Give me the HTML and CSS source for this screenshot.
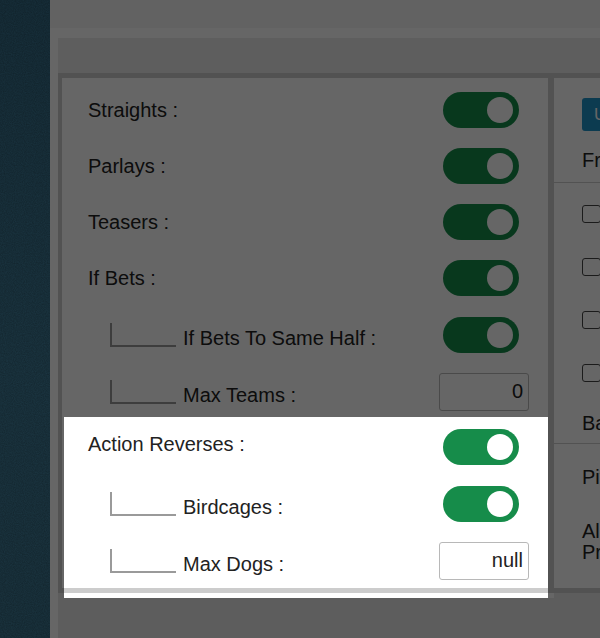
FILE: index.html
```html
<!DOCTYPE html>
<html lang="en">
<head>
    <meta charset="UTF-8">
    <meta name="viewport" content="width=device-width, initial-scale=1.0">
    <title>Wager Settings</title>
    <link rel="stylesheet" href="styles.css">
</head>
<body>
    <div class="sidebar">
        <svg class="grain" width="50" height="638">
            <filter id="noise">
                <feTurbulence type="fractalNoise" baseFrequency="0.9" numOctaves="2" seed="3"/>
                <feColorMatrix type="matrix" values="0 0 0 0 0  0 0 0 0 0  0 0 0 0 0  0 0 0 0.3 0"/>
            </filter>
            <rect width="50" height="638" filter="url(#noise)"/>
        </svg>
    </div>
    <div class="main">
        <div class="topbar"></div>
        <div class="content">
            <div class="subbar"></div>
            <div class="panels">
                <div class="panel panel-left">
                    <div class="row">
                        <span class="label">Straights :</span>
                        <div class="control"><span class="toggle"></span></div>
                    </div>
                    <div class="row">
                        <span class="label">Parlays :</span>
                        <div class="control"><span class="toggle"></span></div>
                    </div>
                    <div class="row">
                        <span class="label">Teasers :</span>
                        <div class="control"><span class="toggle"></span></div>
                    </div>
                    <div class="row">
                        <span class="label">If Bets :</span>
                        <div class="control"><span class="toggle"></span></div>
                    </div>
                    <div class="row sub">
                        <span class="branch"></span>
                        <span class="label">If Bets To Same Half :</span>
                        <div class="control"><span class="toggle"></span></div>
                    </div>
                    <div class="row sub">
                        <span class="branch"></span>
                        <span class="label">Max Teams :</span>
                        <div class="control"><input class="field" type="text" value="0"></div>
                    </div>
                    <div class="group">
                        <div class="row main-row">
                            <span class="label">Action Reverses :</span>
                            <div class="control"><span class="toggle"></span></div>
                        </div>
                        <div class="row sub">
                            <span class="branch"></span>
                            <span class="label">Birdcages :</span>
                            <div class="control"><span class="toggle"></span></div>
                        </div>
                        <div class="row sub">
                            <span class="branch"></span>
                            <span class="label">Max Dogs :</span>
                            <div class="control"><input class="field" type="text" value="null"></div>
                        </div>
                    </div>
                </div>
                <div class="panel panel-right">
                    <div class="rp-head">
                        <button class="btn-blue">Update</button>
                        <div class="rp-title">From</div>
                    </div>
                    <div class="rp-list">
                        <div class="rp-check"><span class="box"></span>Soccer</div>
                        <div class="rp-check"><span class="box"></span>Hockey</div>
                        <div class="rp-check"><span class="box"></span>Tennis</div>
                        <div class="rp-check"><span class="box"></span>Golf</div>
                    </div>
                    <div class="rp-item ba">Base Limit</div>
                    <div class="rp-item pi">Pitchers</div>
                    <div class="rp-item al">Allow<br>Props</div>
                </div>
            </div>
            <div class="under"></div>
        </div>
    </div>

    <div class="highlight"></div>
</body>
</html>
```

FILE: styles.css
```css
* {
    box-sizing: border-box;
}
body {
    margin: 0;
    height: 100vh;
    display: flex;
    overflow: hidden;
    font-family: "Liberation Sans", Arial, sans-serif;
    font-size: 20px;
    color: #222;
    background: #fff;
}
.sidebar {
    width: 50px;
    flex-shrink: 0;
    background: linear-gradient(#3b7896, #4689a8 60%, #4383a0);
    overflow: hidden;
}
.grain {
    display: block;
}
.main {
    flex: 1;
    display: flex;
    flex-direction: column;
    background: #fff;
    min-width: 0;
}
.topbar {
    height: 33px;
    background: #f6f6f6;
    border-bottom: 5px solid #fff;
}
.content {
    flex: 1;
    margin: 5px 0 0 8px;
    background: #e8e8e8;
    overflow: hidden;
}
.subbar {
    height: 35px;
    background: #ebebeb;
}
.panels {
    display: flex;
    height: 520px;
}
.under {
    width: 490px;
    height: 5px;
    margin-left: 6px;
    background: #fff;
}
.panel {
    background: #fff;
    border: 5px solid #ccc;
    flex-shrink: 0;
}
.panel-left {
    width: 495px;
    border-left-width: 4px;
    padding: 4px 19px 0 26px;
}
.row {
    display: flex;
    align-items: center;
    height: 56px;
}
.row.sub {
    height: 57px;
}
.group {
    margin-top: -2px;
}
.group .row {
    height: 57px;
}
.label {
    flex: 1;
    white-space: nowrap;
}
.sub .label {
    padding-top: 8px;
}
.main-row .label {
    padding-bottom: 4px;
}
.branch {
    width: 66px;
    height: 24px;
    margin-left: 22px;
    margin-right: 7px;
    border-left: 2px solid #9a9a9a;
    border-bottom: 2px solid #9a9a9a;
}
.control {
    width: 90px;
    display: flex;
    justify-content: flex-end;
}
.toggle {
    position: relative;
    width: 76px;
    height: 36px;
    margin-right: 10px;
    border-radius: 18px;
    background: #168c4a;
}
.toggle::after {
    content: "";
    position: absolute;
    top: 5px;
    right: 6px;
    width: 26px;
    height: 26px;
    border-radius: 50%;
    background: #fff;
}
.field {
    width: 90px;
    height: 38px;
    border: 1px solid #b8b8b8;
    border-radius: 3px;
    padding: 0 5px 0 0;
    text-align: right;
    font-family: "Liberation Sans", Arial, sans-serif;
    font-size: 20px;
    color: #222;
    background: #fff;
    outline: none;
}
.panel-right {
    width: 320px;
    border-left-width: 1px;
}
.rp-head {
    padding: 20px 0 10px 28px;
    border-bottom: 1px solid #ccc;
}
.btn-blue {
    display: block;
    height: 33px;
    padding: 0 12px;
    border: none;
    border-radius: 3px;
    background: #1f93c9;
    color: #fff;
    font-family: "Liberation Sans", Arial, sans-serif;
    font-size: 17px;
}
.rp-title {
    margin-top: 17px;
    line-height: 24px;
}
.rp-list {
    padding: 4px 0 0 28px;
}
.rp-check {
    display: flex;
    align-items: center;
    height: 53px;
}
.box {
    width: 19px;
    height: 18px;
    margin-right: 12px;
    border: 1.5px solid #444;
    border-radius: 3px;
}
.rp-item {
    padding-left: 28px;
    line-height: 24px;
}
.ba {
    padding-top: 12px;
    padding-bottom: 8px;
    border-bottom: 1px solid #ccc;
}
.pi {
    padding-top: 21px;
    padding-bottom: 16px;
}
.al {
    padding-top: 16px;
    line-height: 21px;
}
.highlight {
    position: absolute;
    left: 64px;
    top: 417px;
    width: 484px;
    height: 181px;
    box-shadow: 0 0 0 2000px rgba(0, 0, 0, 0.6);
    pointer-events: none;
    z-index: 10;
}
```
